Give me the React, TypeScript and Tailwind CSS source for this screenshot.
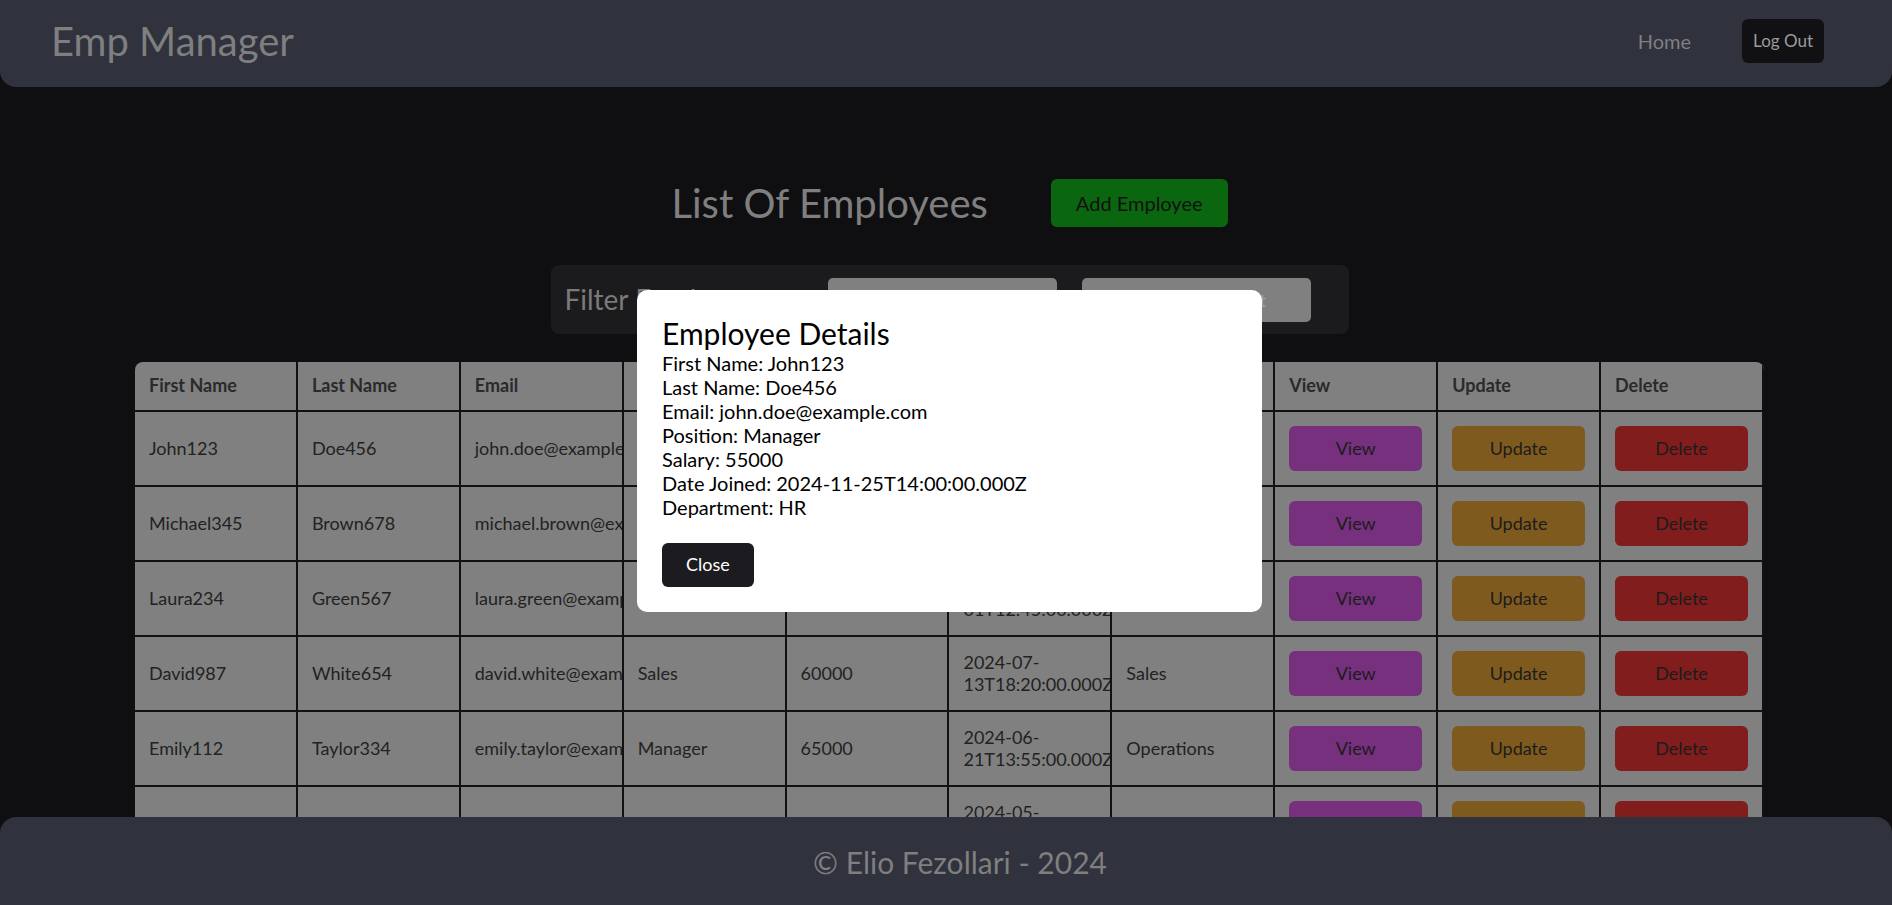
import React from "react";

type Employee = {
  firstName: string;
  lastName: string;
  email: string;
  position: string;
  salary: number;
  dateJoined: string;
  department: string;
};

const employees: Employee[] = [
  { firstName: "John123", lastName: "Doe456", email: "john.doe@example.com", position: "Manager", salary: 55000, dateJoined: "2024-11-25T14:00:00.000Z", department: "HR" },
  { firstName: "Michael345", lastName: "Brown678", email: "michael.brown@example.com", position: "Developer", salary: 70000, dateJoined: "2024-10-15T09:30:00.000Z", department: "IT" },
  { firstName: "Laura234", lastName: "Green567", email: "laura.green@example.com", position: "Designer", salary: 52000, dateJoined: "2024-08-01T12:45:00.000Z", department: "Marketing" },
  { firstName: "David987", lastName: "White654", email: "david.white@example.com", position: "Sales", salary: 60000, dateJoined: "2024-07-13T18:20:00.000Z", department: "Sales" },
  { firstName: "Emily112", lastName: "Taylor334", email: "emily.taylor@example.com", position: "Manager", salary: 65000, dateJoined: "2024-06-21T13:55:00.000Z", department: "Operations" },
  { firstName: "Chris556", lastName: "Wilson778", email: "chris.wilson@example.com", position: "Analyst", salary: 58000, dateJoined: "2024-05-10T08:15:00.000Z", department: "Finance" },
];

const headers = ["First Name", "Last Name", "Email", "Position", "Salary", "Date Joined", "Department", "View", "Update", "Delete"];

const cell = "h-[75px] overflow-hidden border-b-2 border-r-2 border-[#111] px-[14px] align-middle";

const App = () => {
  const selected = employees[0];

  return (
    <div className="relative h-screen overflow-hidden bg-[#0f0f11] font-['Lato',sans-serif] leading-[1.2]">
      <nav className="flex h-[87px] items-center justify-between rounded-b-2xl bg-[#30323e] pb-[5px] pl-[51px] pr-[68px]">
        <h1 className="text-[40px] text-[#7f7f7f]">Emp Manager</h1>
        <div className="flex items-center gap-[51px]">
          <a className="text-[20px] text-[#7f7f7f]">Home</a>
          <button className="h-[44px] rounded-md bg-[#111114] px-[11px] text-[17px] text-[#9c9c9c]">Log Out</button>
        </div>
      </nav>

      <main className="pl-[7px]">
        <div className="mt-[92px] flex items-center justify-center gap-[63px]">
          <h2 className="text-[40px] text-[#7f7f7f]">List Of Employees</h2>
          <button className="h-[48px] rounded-md bg-[#0a660f] px-[25px] text-[20px] text-[#111]">Add Employee</button>
        </div>

        <div className="mx-auto mt-[38px] flex h-[69px] w-[798px] items-center rounded-lg bg-[#1b1b1d] px-[14px]">
          <span className="w-[263px] shrink-0 text-[28px] text-[#7a7a7a]">Filter Employees</span>
          <input
            className="h-[44px] w-[229px] rounded-[5px] bg-[#808080] pl-5 pr-2 text-[18px] outline-none placeholder:text-[#a3a3a3]"
            placeholder="Filter by Position"
          />
          <input
            className="ml-[25px] h-[44px] w-[229px] rounded-[5px] bg-[#808080] pl-5 pr-2 text-[18px] outline-none placeholder:text-[#a3a3a3]"
            placeholder="Filter by Department"
          />
        </div>

        <div className="mx-auto mt-[28px] w-[1629px] overflow-hidden rounded-t-lg bg-[#808080]">
          <table className="w-full table-fixed border-separate border-spacing-0 text-[18px] text-[#222]">
            <thead>
              <tr>
                {headers.map((h) => (
                  <th key={h} className="h-[50px] border-b-2 border-r-2 border-[#111] px-[14px] text-left font-bold text-[#2a2a2a]">
                    {h}
                  </th>
                ))}
              </tr>
            </thead>
            <tbody>
              {employees.map((e) => (
                <tr key={e.email}>
                  <td className={`${cell} whitespace-nowrap`}>{e.firstName}</td>
                  <td className={`${cell} whitespace-nowrap`}>{e.lastName}</td>
                  <td className={`${cell} whitespace-nowrap`}>{e.email}</td>
                  <td className={`${cell} whitespace-nowrap`}>{e.position}</td>
                  <td className={`${cell} whitespace-nowrap`}>{e.salary}</td>
                  <td className={cell}>{e.dateJoined}</td>
                  <td className={`${cell} whitespace-nowrap`}>{e.department}</td>
                  <td className={cell}>
                    <button className="h-[45px] w-full rounded-md bg-[#76307e] text-[18px] text-[#1c1c1c]">View</button>
                  </td>
                  <td className={cell}>
                    <button className="h-[45px] w-full rounded-md bg-[#7f5a1e] text-[18px] text-[#1c1c1c]">Update</button>
                  </td>
                  <td className={cell}>
                    <button className="h-[45px] w-full rounded-md bg-[#811d1d] text-[18px] text-[#1c1c1c]">Delete</button>
                  </td>
                </tr>
              ))}
            </tbody>
          </table>
        </div>
      </main>

      <footer className="fixed bottom-0 left-0 right-0 flex h-[88px] items-center justify-center rounded-t-2xl bg-[#30323e] pl-[28px] pt-[2px] text-[30px] text-[#7f7f7f]">
        © Elio Fezollari - 2024
      </footer>

      <div className="fixed inset-0 flex items-center justify-center pb-[3px] pl-[7px]">
        <div className="w-[625px] rounded-[10px] bg-white p-[25px] text-black">
          <h2 className="text-[30px]">Employee Details</h2>
          <p className="text-[20px]">First Name: {selected.firstName}</p>
          <p className="text-[20px]">Last Name: {selected.lastName}</p>
          <p className="text-[20px]">Email: {selected.email}</p>
          <p className="text-[20px]">Position: {selected.position}</p>
          <p className="text-[20px]">Salary: {selected.salary}</p>
          <p className="text-[20px]">Date Joined: {selected.dateJoined}</p>
          <p className="text-[20px]">Department: {selected.department}</p>
          <button className="mt-6 h-[44px] rounded-md bg-[#1c1c20] px-6 text-[18px] text-white">Close</button>
        </div>
      </div>
    </div>
  );
};

export default App;
